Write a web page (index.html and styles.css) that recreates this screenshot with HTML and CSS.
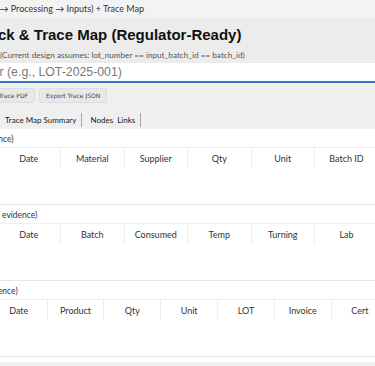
FILE: index.html
```html
<!DOCTYPE html>
<html lang="en">
<head>
    <meta charset="UTF-8">
    <meta name="viewport" content="width=device-width, initial-scale=1.0">
    <title>Lot Track &amp; Trace Map</title>
    <link rel="stylesheet" href="styles.css">
</head>
<body>
    <div class="page">
        <div class="crumb">Trace (Output &rarr; Processing &rarr; Inputs) + Trace Map</div>
        <div class="head">
            <h1>Lot Track &amp; Trace Map (Regulator-Ready)</h1>
            <p class="note">(Current design assumes: lot_number == input_batch_id == batch_id)</p>
        </div>
        <input class="lot-input" type="text" placeholder="Enter LOT number (e.g., LOT-2025-001)">
        <div class="toolbar">
            <button class="btn">Export Trace PDF</button>
            <button class="btn">Export Trace JSON</button>
        </div>
        <div class="tabs">
            <span class="tab">Trace Map Summary</span>
            <span class="tab">Nodes&nbsp; Links</span>
        </div>

        <div class="sections">
            <section class="card">
                <div class="card-title inputs">Inputs (supplier evidence)</div>
                <table class="grid">
                    <thead>
                        <tr><th>Input</th><th>Date</th><th>Material</th><th>Supplier</th><th>Qty</th><th>Unit</th><th>Batch ID</th></tr>
                    </thead>
                    <tbody></tbody>
                </table>
            </section>
            <section class="card">
                <div class="card-title process">Processing (batch records as evidence)</div>
                <table class="grid">
                    <thead>
                        <tr><th>Step</th><th>Date</th><th>Batch</th><th>Consumed</th><th>Temp</th><th>Turning</th><th>Lab</th></tr>
                    </thead>
                    <tbody></tbody>
                </table>
            </section>
            <section class="card">
                <div class="card-title outputs">Outputs (sales evidence)</div>
                <table class="grid wide">
                    <thead>
                        <tr><th>Order</th><th>Date</th><th>Product</th><th>Qty</th><th>Unit</th><th>LOT</th><th>Invoice</th><th>Cert</th></tr>
                    </thead>
                    <tbody></tbody>
                </table>
            </section>
        </div>
    </div>
</body>
</html>
```

FILE: styles.css
```css
body {
    margin: 0;
    background-color: #efefef;
    font-family: Lato, "Open Sans", sans-serif;
    color: #333;
    overflow: hidden;
}
.page {
    margin-left: -67px;
    width: 460px;
}
.crumb {
    height: 18px;
    line-height: 18px;
    font-size: 9px;
    padding-left: 10px;
    background-color: #f3f3f3;
    color: #333;
    white-space: nowrap;
}
.head {
    height: 45px;
    padding-left: 15px;
    background-color: #ececec;
}
.head h1 {
    margin: 0;
    padding-top: 8px;
    font-family: "Liberation Sans", Arial, sans-serif;
    font-size: 15px;
    line-height: 18px;
    color: #111;
    white-space: nowrap;
}
.note {
    margin: 0;
    padding-top: 5px;
    padding-left: 52px;
    font-size: 8.2px;
    line-height: 12px;
    color: #555;
    white-space: nowrap;
}
.lot-input {
    display: block;
    box-sizing: border-box;
    width: 460px;
    height: 20px;
    margin: 0;
    padding: 0 0 0 2px;
    text-indent: -33px;
    border: 0;
    border-bottom: 2px solid #3577c4;
    background-color: #fff;
    font-family: "Liberation Sans", Arial, sans-serif;
    font-size: 12.3px;
    outline: none;
}
.lot-input::placeholder {
    color: #7a7a7a;
}
.toolbar {
    display: flex;
    gap: 4px;
    padding: 5px 0 3px 37px;
}
.btn {
    height: 15px;
    padding: 0 6px;
    font-family: "DejaVu Sans", Verdana, sans-serif;
    font-size: 6px;
    color: #444;
    background-color: #e8e8e8;
    border: 1px solid #dcdcdc;
    border-radius: 3px;
}
.tabs {
    display: flex;
    box-sizing: border-box;
    height: 23px;
    align-items: flex-end;
    padding: 0 0 2px 64px;
}
.tab {
    padding: 2px 5px 2px 8px;
    font-size: 8px;
    line-height: 10px;
    color: #222;
    border-right: 1px solid #a8a8a8;
    white-space: pre;
}
.sections {
    background-color: #fff;
    padding-bottom: 5px;
}
.card {
    box-sizing: border-box;
    height: 76px;
    padding-top: 2px;
    border-bottom: 1px solid #e6e6e6;
}
.card-title {
    height: 16px;
    line-height: 16px;
    font-size: 8.5px;
    color: #333;
    white-space: nowrap;
}
.card-title.inputs {
    text-indent: -14px;
}
.card-title.process {
    text-indent: -38px;
}
.card-title.outputs {
    text-indent: -6px;
}
.grid {
    width: 445px;
    table-layout: fixed;
    border-collapse: collapse;
}
.grid.wide {
    width: 455px;
}
.grid th {
    height: 20px;
    padding: 0;
    font-weight: normal;
    font-size: 9px;
    color: #333;
    text-align: center;
    border-top: 1px solid #eee;
    border-left: 1px solid #eee;
}
```
